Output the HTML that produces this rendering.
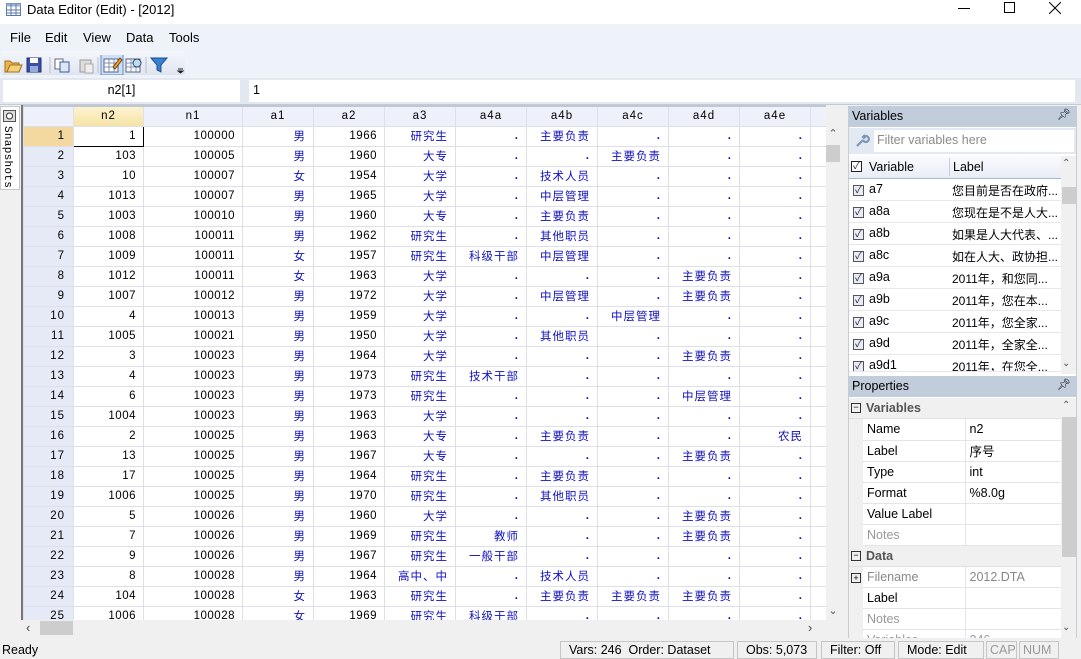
<!DOCTYPE html>
<html><head><meta charset="utf-8">
<style>
*{box-sizing:border-box;margin:0;padding:0}
body{width:1081px;height:659px;overflow:hidden;background:#f0f0f0;font-family:"Liberation Sans","Noto Sans CJK SC",sans-serif;font-size:13px;color:#000;position:relative}
.abs{position:absolute}
#title{left:0;top:0;width:1081px;height:24px;background:#fff}
#menu{left:0;top:24px;width:1081px;height:54px;background:#eef2f9}
#menu span{position:absolute;top:6px;font-size:13px}
#fbar{left:0;top:78px;width:1081px;height:27px;background:#e3e8f0;border-bottom:1px solid #c2cbd8}
table{border-collapse:collapse;table-layout:fixed;font-family:"Liberation Sans","Noto Sans CJK SC",sans-serif;font-size:11.5px}
#grid td{height:20px;border:1px solid #dde0ea;text-align:right;padding-right:7px;white-space:nowrap;overflow:hidden;color:#1010c0;letter-spacing:1px}
#grid td.n{color:#000;letter-spacing:.5px}
#grid td.h{background:#e6eaf6;color:#000;padding-right:8px}
#grid tr.hd td{background:#eef1fa;text-align:center;color:#000;padding:0}
#grid td.d{font-weight:bold}
.vrow{height:22px;border-bottom:1px solid #e5e8ee;position:relative}
.vrow span{white-space:nowrap}
.vrow span.l{width:108px;overflow:hidden;font-size:12px}
.cb{position:absolute;left:4px;top:6px;width:11px;height:11px;border:1px solid #555;background:#e8ecf6;font-size:10px;line-height:9px;text-align:center;color:#223}
.pr td{height:21px;border-bottom:1px solid #e2e5ea;border-right:1px solid #e2e5ea;padding-left:4px;font-size:12.5px}
.st{position:absolute;top:641px;height:18px;border:1px solid #c5c5c5;font-size:12.5px;padding:1px 8px 0}
</style></head><body>
<div id="title" class="abs">
 <svg class="abs" style="left:6px;top:3px" width="16" height="14"><rect x=".5" y=".5" width="14" height="12" fill="#fff" stroke="#5b78a8"/><rect x=".5" y=".5" width="14" height="3" fill="#9db3d6"/><path d="M5 1v12M10 1v12M1 7h14M1 10h14" stroke="#5b78a8"/></svg>
 <span class="abs" style="left:27px;top:2px;font-size:13px">Data Editor (Edit) - [2012]</span>
 <div class="abs" style="left:958px;top:8px;width:12px;height:1px;background:#000"></div>
 <div class="abs" style="left:1004px;top:2px;width:11px;height:11px;border:1px solid #000"></div>
 <svg class="abs" style="left:1049px;top:2px" width="12" height="12"><path d="M0 0L12 12M12 0L0 12" stroke="#000" stroke-width="1"/></svg>
</div>
<div id="menu" class="abs">
 <span style="left:10px">File</span><span style="left:45px">Edit</span><span style="left:83px">View</span><span style="left:126px">Data</span><span style="left:169px">Tools</span>
 <div class="abs" style="left:1px;top:27px;width:184px;height:24px;background:linear-gradient(#f4f6fb,#dfe5f0);border-radius:3px"></div>
 <svg class="abs" style="left:3px;top:31px" width="185" height="20">
  <path d="M2 6h5l2 2h7v9H2z" fill="#e8b64a" stroke="#a07020"/><path d="M4 17l3-7h12l-3 7z" fill="#f5d27a" stroke="#a07020"/>
  <rect x="24" y="3" width="14" height="14" fill="#3a4fa8" stroke="#22306a"/><rect x="27" y="3" width="8" height="5" fill="#fff"/><rect x="27" y="11" width="8" height="6" fill="#9aa8d8"/>
  <line x1="47" y1="2" x2="47" y2="18" stroke="#b8c0cc"/>
  <rect x="52" y="4" width="8" height="10" fill="#fff" stroke="#667"/><rect x="57" y="7" width="9" height="10" fill="#dde6f5" stroke="#3b5fa0"/>
  <rect x="77" y="5" width="11" height="12" fill="#ddd" stroke="#999"/><rect x="82" y="9" width="8" height="9" fill="#eee" stroke="#aaa"/>
  <line x1="95" y1="2" x2="95" y2="18" stroke="#b8c0cc"/>
  <rect x="98" y="-1" width="22" height="21" fill="#cfe0f6" stroke="#5a86c8"/>
  <rect x="101" y="4" width="14" height="13" fill="#fff" stroke="#55608a"/><path d="M101 8h14M106 4v13M111 4v13M101 12h14" stroke="#8090b8"/><path d="M110 12l7-9 2 2-7 9z" fill="#f0a030" stroke="#704010"/>
  <rect x="123" y="4" width="14" height="13" fill="#fff" stroke="#55608a"/><path d="M123 8h14M128 4v13M133 4v13M123 12h14" stroke="#8090b8"/><circle cx="134" cy="8" r="4" fill="#bde" stroke="#246"/>
  <line x1="143" y1="2" x2="143" y2="18" stroke="#b8c0cc"/>
  <path d="M148 3h16l-6 7v7l-4-2v-5z" fill="#3a7fd0" stroke="#1a4f90"/>
  <path d="M175 14h5M175 16l2.5 2 2.5-2z" stroke="#222" fill="#222"/>
 </svg>
</div>
<div id="fbar" class="abs">
 <div class="abs" style="left:3px;top:2px;width:237px;height:22px;background:#fff;text-align:center;padding-top:3px;font-size:12.5px">n2[1]</div>
 <div class="abs" style="left:249px;top:2px;width:826px;height:22px;background:#fff;padding:3px 0 0 4px;font-size:12.5px">1</div>
</div>
<div class="abs" style="left:0;top:106px;width:20px;height:84px;background:#fff;border:1px solid #c8c8c8"></div>
<svg class="abs" style="left:3px;top:110px" width="13" height="12"><rect x=".5" y=".5" width="12" height="11" fill="#ddd" stroke="#555"/><circle cx="6.5" cy="6" r="3" fill="#fff" stroke="#333"/></svg>
<div class="abs" style="left:13px;top:126px;transform-origin:0 0;transform:rotate(90deg);font-size:11px;font-family:'Liberation Mono',monospace;letter-spacing:.3px;white-space:nowrap;">Snapshots</div>
<div class="abs" style="left:21px;top:105px;width:805px;height:515px;border-left:2px solid #777;background:#fff;overflow:hidden">
<table id="grid" style="width:803px">
<colgroup><col style="width:50px"><col style="width:70px"><col style="width:99px"><col style="width:71px"><col style="width:71px"><col style="width:71px"><col style="width:71px"><col style="width:71px"><col style="width:71px"><col style="width:71px"><col style="width:71px"><col style="width:16px"></colgroup>
<tr class="hd" style="border-top:2px solid #c0c6d2"><td></td><td style="background:linear-gradient(#fdf3d0,#f6e3a6)">n2</td><td>n1</td><td>a1</td><td>a2</td><td>a3</td><td>a4a</td><td>a4b</td><td>a4c</td><td>a4d</td><td>a4e</td><td></td></tr>
<tr><td class="h" style="background:#f3d8a0">1</td><td class="n" style="border:1.5px solid #000">1</td><td class="n">100000</td><td>男</td><td class="n">1966</td><td>研究生</td><td class="d">.</td><td>主要负责</td><td class="d">.</td><td class="d">.</td><td class="d">.</td><td></td></tr>
<tr><td class="h">2</td><td class="n">103</td><td class="n">100005</td><td>男</td><td class="n">1960</td><td>大专</td><td class="d">.</td><td class="d">.</td><td>主要负责</td><td class="d">.</td><td class="d">.</td><td></td></tr>
<tr><td class="h">3</td><td class="n">10</td><td class="n">100007</td><td>女</td><td class="n">1954</td><td>大学</td><td class="d">.</td><td>技术人员</td><td class="d">.</td><td class="d">.</td><td class="d">.</td><td></td></tr>
<tr><td class="h">4</td><td class="n">1013</td><td class="n">100007</td><td>男</td><td class="n">1965</td><td>大学</td><td class="d">.</td><td>中层管理</td><td class="d">.</td><td class="d">.</td><td class="d">.</td><td></td></tr>
<tr><td class="h">5</td><td class="n">1003</td><td class="n">100010</td><td>男</td><td class="n">1960</td><td>大专</td><td class="d">.</td><td>主要负责</td><td class="d">.</td><td class="d">.</td><td class="d">.</td><td></td></tr>
<tr><td class="h">6</td><td class="n">1008</td><td class="n">100011</td><td>男</td><td class="n">1962</td><td>研究生</td><td class="d">.</td><td>其他职员</td><td class="d">.</td><td class="d">.</td><td class="d">.</td><td></td></tr>
<tr><td class="h">7</td><td class="n">1009</td><td class="n">100011</td><td>女</td><td class="n">1957</td><td>研究生</td><td>科级干部</td><td>中层管理</td><td class="d">.</td><td class="d">.</td><td class="d">.</td><td></td></tr>
<tr><td class="h">8</td><td class="n">1012</td><td class="n">100011</td><td>女</td><td class="n">1963</td><td>大学</td><td class="d">.</td><td class="d">.</td><td class="d">.</td><td>主要负责</td><td class="d">.</td><td></td></tr>
<tr><td class="h">9</td><td class="n">1007</td><td class="n">100012</td><td>男</td><td class="n">1972</td><td>大学</td><td class="d">.</td><td>中层管理</td><td class="d">.</td><td>主要负责</td><td class="d">.</td><td></td></tr>
<tr><td class="h">10</td><td class="n">4</td><td class="n">100013</td><td>男</td><td class="n">1959</td><td>大学</td><td class="d">.</td><td class="d">.</td><td>中层管理</td><td class="d">.</td><td class="d">.</td><td></td></tr>
<tr><td class="h">11</td><td class="n">1005</td><td class="n">100021</td><td>男</td><td class="n">1950</td><td>大学</td><td class="d">.</td><td>其他职员</td><td class="d">.</td><td class="d">.</td><td class="d">.</td><td></td></tr>
<tr><td class="h">12</td><td class="n">3</td><td class="n">100023</td><td>男</td><td class="n">1964</td><td>大学</td><td class="d">.</td><td class="d">.</td><td class="d">.</td><td>主要负责</td><td class="d">.</td><td></td></tr>
<tr><td class="h">13</td><td class="n">4</td><td class="n">100023</td><td>男</td><td class="n">1973</td><td>研究生</td><td>技术干部</td><td class="d">.</td><td class="d">.</td><td class="d">.</td><td class="d">.</td><td></td></tr>
<tr><td class="h">14</td><td class="n">6</td><td class="n">100023</td><td>男</td><td class="n">1973</td><td>研究生</td><td class="d">.</td><td class="d">.</td><td class="d">.</td><td>中层管理</td><td class="d">.</td><td></td></tr>
<tr><td class="h">15</td><td class="n">1004</td><td class="n">100023</td><td>男</td><td class="n">1963</td><td>大学</td><td class="d">.</td><td class="d">.</td><td class="d">.</td><td class="d">.</td><td class="d">.</td><td></td></tr>
<tr><td class="h">16</td><td class="n">2</td><td class="n">100025</td><td>男</td><td class="n">1963</td><td>大专</td><td class="d">.</td><td>主要负责</td><td class="d">.</td><td class="d">.</td><td>农民</td><td></td></tr>
<tr><td class="h">17</td><td class="n">13</td><td class="n">100025</td><td>男</td><td class="n">1967</td><td>大专</td><td class="d">.</td><td class="d">.</td><td class="d">.</td><td>主要负责</td><td class="d">.</td><td></td></tr>
<tr><td class="h">18</td><td class="n">17</td><td class="n">100025</td><td>男</td><td class="n">1964</td><td>研究生</td><td class="d">.</td><td>主要负责</td><td class="d">.</td><td class="d">.</td><td class="d">.</td><td></td></tr>
<tr><td class="h">19</td><td class="n">1006</td><td class="n">100025</td><td>男</td><td class="n">1970</td><td>研究生</td><td class="d">.</td><td>其他职员</td><td class="d">.</td><td class="d">.</td><td class="d">.</td><td></td></tr>
<tr><td class="h">20</td><td class="n">5</td><td class="n">100026</td><td>男</td><td class="n">1960</td><td>大学</td><td class="d">.</td><td class="d">.</td><td class="d">.</td><td>主要负责</td><td class="d">.</td><td></td></tr>
<tr><td class="h">21</td><td class="n">7</td><td class="n">100026</td><td>男</td><td class="n">1969</td><td>研究生</td><td>教师</td><td class="d">.</td><td class="d">.</td><td>主要负责</td><td class="d">.</td><td></td></tr>
<tr><td class="h">22</td><td class="n">9</td><td class="n">100026</td><td>男</td><td class="n">1967</td><td>研究生</td><td>一般干部</td><td class="d">.</td><td class="d">.</td><td class="d">.</td><td class="d">.</td><td></td></tr>
<tr><td class="h">23</td><td class="n">8</td><td class="n">100028</td><td>男</td><td class="n">1964</td><td>高中、中</td><td class="d">.</td><td>技术人员</td><td class="d">.</td><td class="d">.</td><td class="d">.</td><td></td></tr>
<tr><td class="h">24</td><td class="n">104</td><td class="n">100028</td><td>女</td><td class="n">1963</td><td>研究生</td><td class="d">.</td><td>主要负责</td><td>主要负责</td><td>主要负责</td><td class="d">.</td><td></td></tr>
<tr><td class="h">25</td><td class="n">1006</td><td class="n">100028</td><td>女</td><td class="n">1969</td><td>研究生</td><td>科级干部</td><td class="d">.</td><td class="d">.</td><td class="d">.</td><td class="d">.</td><td></td></tr>
</table>
</div>
<div class="abs" style="left:826px;top:124px;width:16px;height:497px;background:#f0f0f0"></div>
<div class="abs" style="left:826px;top:127px;width:14px;height:15px;font-size:11px;text-align:center;color:#555">&#8963;</div>
<div class="abs" style="left:826px;top:145px;width:14px;height:17px;background:#cdcdcd"></div>
<div class="abs" style="left:826px;top:604px;width:14px;height:15px;font-size:11px;text-align:center;color:#555">&#8964;</div>
<div class="abs" style="left:23px;top:620px;width:803px;height:16px;background:#f0f0f0"></div>
<div class="abs" style="left:26px;top:620px;font-size:13px;color:#444">&#8249;</div>
<div class="abs" style="left:40px;top:621px;width:33px;height:14px;background:#cdcdcd"></div>
<div class="abs" style="left:808px;top:620px;font-size:13px;color:#444">&#8250;</div>
<div class="abs" style="left:848px;top:106px;width:229px;height:532px;background:#fff;border:1px solid #c8ccd4"></div>
<div class="abs" style="left:848px;top:106px;width:229px;height:21px;background:#c1cddb;padding:3px 0 0 4px;font-size:12.5px">Variables<span style="position:absolute;right:6px;top:2px;font-size:11px">&#x1F4CC;&#xFE0E;</span></div>
<div class="abs" style="left:849px;top:128px;width:227px;height:26px;background:#e3e9f3"></div>
<svg class="abs" style="left:854px;top:133px" width="16" height="16"><path d="M3 13l6-6M9 7a3 3 0 1 0 3-4l-2 2-1-1 2-2" stroke="#7f95b8" stroke-width="2.2" fill="none"/></svg>
<div class="abs" style="left:874px;top:130px;width:200px;height:22px;background:#fff;padding:3px 0 0 3px;color:#8a8a8a;font-size:12.5px">Filter variables here</div>
<div class="abs" style="left:849px;top:156px;width:212px;height:23px;background:linear-gradient(#fafbfe,#e8ecf5);border-bottom:1px solid #aab4c8">
 <div class="cb" style="left:2px;top:5px;background:#fff;border-color:#222">✓</div>
 <span class="abs" style="left:20px;top:4px;font-size:12.5px">Variable</span>
 <div class="abs" style="left:100px;top:2px;width:1px;height:18px;background:#c8cfdc"></div>
 <span class="abs" style="left:104px;top:4px;font-size:12.5px">Label</span>
</div>
<div class="abs" style="left:849px;top:179px;width:212px;font-size:12.5px">
 <div class="vrow"><div class="cb">✓</div><span class="abs" style="left:20px;top:3px">a7</span><span class="abs l" style="left:103px;top:3px">您目前是否在政府...</span></div>
 <div class="vrow"><div class="cb">✓</div><span class="abs" style="left:20px;top:3px">a8a</span><span class="abs l" style="left:103px;top:3px">您现在是不是人大...</span></div>
 <div class="vrow"><div class="cb">✓</div><span class="abs" style="left:20px;top:3px">a8b</span><span class="abs l" style="left:103px;top:3px">如果是人大代表、...</span></div>
 <div class="vrow"><div class="cb">✓</div><span class="abs" style="left:20px;top:3px">a8c</span><span class="abs l" style="left:103px;top:3px">如在人大、政协担...</span></div>
 <div class="vrow"><div class="cb">✓</div><span class="abs" style="left:20px;top:3px">a9a</span><span class="abs l" style="left:103px;top:3px">2011年，和您同...</span></div>
 <div class="vrow"><div class="cb">✓</div><span class="abs" style="left:20px;top:3px">a9b</span><span class="abs l" style="left:103px;top:3px">2011年，您在本...</span></div>
 <div class="vrow"><div class="cb">✓</div><span class="abs" style="left:20px;top:3px">a9c</span><span class="abs l" style="left:103px;top:3px">2011年，您全家...</span></div>
 <div class="vrow"><div class="cb">✓</div><span class="abs" style="left:20px;top:3px">a9d</span><span class="abs l" style="left:103px;top:3px">2011年，全家全...</span></div>
 <div class="vrow" style="height:17px;overflow:hidden"><div class="cb">✓</div><span class="abs" style="left:20px;top:3px">a9d1</span><span class="abs l" style="left:103px;top:3px">2011年，在您全...</span></div>
</div>
<div class="abs" style="left:1061px;top:156px;width:15px;height:218px;background:#f0f0f0"></div>
<div class="abs" style="left:1062px;top:158px;font-size:10px;color:#555">&#8963;</div>
<div class="abs" style="left:1062px;top:187px;width:14px;height:17px;background:#cdcdcd"></div>
<div class="abs" style="left:1062px;top:358px;font-size:10px;color:#555">&#8964;</div>
<div class="abs" style="left:848px;top:376px;width:229px;height:21px;background:#c1cddb;padding:3px 0 0 4px;font-size:12.5px">Properties<span style="position:absolute;right:6px;top:2px;font-size:11px">&#x1F4CC;&#xFE0E;</span></div>
<div class="abs" style="left:849px;top:398px;width:212px;height:240px;background:#f0f0f0;overflow:hidden;font-size:12.5px">
 <div style="height:21px;position:relative;border-bottom:1px solid #e0e0e0"><span class="abs" style="left:2px;top:5px;width:10px;height:10px;border:1px solid #333;font-size:9px;line-height:7px;text-align:center">−</span><b class="abs" style="left:17px;top:3px;color:#555">Variables</b></div>
 <table class="pr" style="margin-left:14px;width:198px;background:#fff"><colgroup><col style="width:102px"><col style="width:96px"></colgroup>
  <tr><td>Name</td><td>n2</td></tr><tr><td>Label</td><td>序号</td></tr><tr><td>Type</td><td>int</td></tr><tr><td>Format</td><td>%8.0g</td></tr><tr><td>Value Label</td><td></td></tr><tr><td style="color:#999">Notes</td><td></td></tr></table>
 <div style="height:21px;position:relative;border-bottom:1px solid #e0e0e0"><span class="abs" style="left:2px;top:5px;width:10px;height:10px;border:1px solid #333;font-size:9px;line-height:7px;text-align:center">−</span><b class="abs" style="left:17px;top:3px;color:#555">Data</b></div>
 <span class="abs" style="left:2px;top:175px;width:10px;height:10px;border:1px solid #333;font-size:9px;line-height:8px;text-align:center">+</span>
 <table class="pr" style="margin-left:14px;width:198px;background:#fff"><colgroup><col style="width:102px"><col style="width:96px"></colgroup>
  <tr><td style="color:#888">Filename</td><td style="color:#888">2012.DTA</td></tr><tr><td>Label</td><td></td></tr><tr><td style="color:#999">Notes</td><td></td></tr><tr><td style="color:#999">Variables</td><td style="color:#999">246</td></tr></table>
</div>
<div class="abs" style="left:1061px;top:398px;width:15px;height:240px;background:#f0f0f0"></div>
<div class="abs" style="left:1062px;top:400px;font-size:10px;color:#555">&#8963;</div>
<div class="abs" style="left:1062px;top:417px;width:14px;height:140px;background:#cdcdcd"></div>
<div class="abs" style="left:1062px;top:622px;font-size:10px;color:#555">&#8964;</div>
<span class="abs" style="left:2px;top:643px;font-size:12.5px">Ready</span>
<div class="st" style="left:560px;width:174px">Vars: 246&nbsp; Order: Dataset</div>
<div class="st" style="left:737px;width:80px">Obs: 5,073</div>
<div class="st" style="left:821px;width:74px">Filter: Off</div>
<div class="st" style="left:898px;width:86px">Mode: Edit</div>
<div class="st" style="left:986px;width:31px;padding:1px 3px;color:#999">CAP</div>
<div class="st" style="left:1019px;width:40px;padding:1px 3px;color:#999">NUM</div>
</body></html>
